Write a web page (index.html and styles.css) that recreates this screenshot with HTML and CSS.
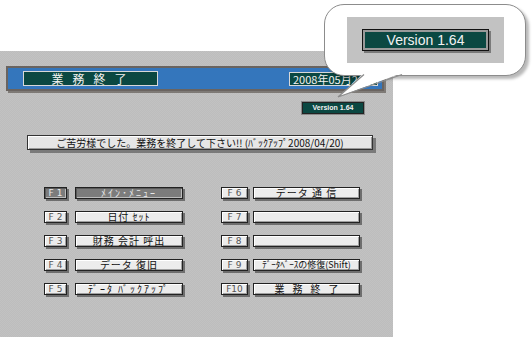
FILE: index.html
```html
<!DOCTYPE html>
<html lang="ja">
<head>
<meta charset="utf-8">
<link rel="stylesheet" href="styles.css">
</head>
<body>
<div class="panel">
  <div class="header">
    <div class="title">業務終了</div>
    <div class="date">2008年05月26日</div>
  </div>
  <div class="verrow"><div class="ver-small">Version 1.64</div></div>
  <div class="message">ご苦労様でした。業務を終了して下さい!!&nbsp;(ﾊﾞｯｸｱｯﾌﾟ2008/04/20)</div>
  <div class="keys">
    <div class="col left">
      <div class="row"><span class="key on">F1</span><span class="label on narrow">ﾒｲﾝ･ﾒﾆｭｰ</span></div>
      <div class="row"><span class="key">F2</span><span class="label">日付 ｾｯﾄ</span></div>
      <div class="row"><span class="key">F3</span><span class="label">財務 会計 呼出</span></div>
      <div class="row"><span class="key">F4</span><span class="label">データ 復旧</span></div>
      <div class="row"><span class="key">F5</span><span class="label narrow">ﾃﾞｰﾀ ﾊﾞｯｸｱｯﾌﾟ</span></div>
    </div>
    <div class="col right">
      <div class="row"><span class="key">F6</span><span class="label">データ 通 信</span></div>
      <div class="row"><span class="key">F7</span><span class="label"></span></div>
      <div class="row"><span class="key">F8</span><span class="label"></span></div>
      <div class="row"><span class="key">F9</span><span class="label tight">ﾃﾞｰﾀﾍﾞｰｽの修復(Shift)</span></div>
      <div class="row"><span class="key k10">F10</span><span class="label wide">業務終了</span></div>
    </div>
  </div>
</div>
<div class="bubble">
  <div class="bubble-inner"><div class="ver-big">Version 1.64</div></div>
</div>
<svg class="tail" width="90" height="40" viewBox="330 66 90 40">
  <polygon points="364,73 338,97 402,73" fill="#fff"/>
  <polyline points="364,74.5 338,97 402,74.5" fill="none" stroke="#8c8c8c" stroke-width="1.3"/>
</svg>
</body>
</html>
```
FILE: styles.css
```css
html, body {
  margin: 0;
  padding: 0;
  background: #fff;
}
body {
  width: 532px;
  height: 337px;
  overflow: hidden;
  font-family: "Noto Sans CJK JP", "DejaVu Sans", sans-serif;
}
.panel {
  margin-top: 51px;
  width: 393px;
  height: 286px;
  box-sizing: border-box;
  padding: 15px 0 0 6px;
  background: #c0c0c0;
  background-image: repeating-conic-gradient(#c2c2c2 0 25%, #bdbdbd 0 50%);
  background-size: 2px 2px;
}
.header {
  width: 378px;
  height: 25px;
  box-sizing: border-box;
  background: #3476bc;
  border: 2px solid #6a6460;
  box-shadow: 2px 2px 0 #7e7a76;
  display: flex;
  align-items: center;
  justify-content: space-between;
  padding: 0 4px 0 15px;
}
.title, .date, .ver-small, .ver-big {
  background: #0b4842;
  color: #f2f2f2;
  box-sizing: border-box;
}
.title {
  width: 135px;
  height: 15px;
  border: 1px solid #d8d8d8;
  font-size: 12px;
  line-height: 13px;
  letter-spacing: 9px;
  text-align: center;
  padding-left: 6px;
}
.date {
  width: 89px;
  height: 14px;
  border: 1px solid #d8d8d8;
  font-size: 11px;
  line-height: 12px;
  padding-left: 3px;
  white-space: nowrap;
  overflow: hidden;
}
.verrow {
  display: flex;
  justify-content: flex-end;
  width: 358px;
  margin-top: 11px;
}
.ver-small {
  width: 62px;
  height: 12px;
  border: 1px solid #222;
  outline: 1px solid #8a8a8a;
  font-family: "Liberation Sans", sans-serif;
  font-weight: bold;
  font-size: 7px;
  line-height: 10px;
  text-align: center;
}
.message {
  margin: 21px 0 0 21px;
  width: 346px;
  height: 15px;
  box-sizing: border-box;
  background: #e6e6e6;
  border: 1px solid #333;
  box-shadow: inset 1px 1px 0 #fff, inset -1px -1px 0 #9a9a9a, 3px 3px 0 #7a7a7a;
  font-size: 10px;
  line-height: 13px;
  text-align: center;
  color: #111;
  white-space: nowrap;
}
.keys {
  display: flex;
  margin: 37px 0 0 38px;
  gap: 38px;
}
.col {
  display: flex;
  flex-direction: column;
  gap: 12px;
}
.row {
  display: flex;
  gap: 8px;
  height: 12px;
}
.right .row { gap: 5px; }
.key, .label {
  box-sizing: border-box;
  height: 12px;
  border: 1px solid #222;
  background: #ececec;
  box-shadow: inset 1px 1px 0 #fff, inset -1px -1px 0 #a0a0a0, 2px 2px 0 #6e6e6e;
  font-size: 10px;
  line-height: 10px;
  text-align: center;
  color: #111;
  white-space: nowrap;
}
.key {
  width: 23px;
  font-family: "DejaVu Sans", sans-serif;
  font-size: 9px;
  letter-spacing: 3px;
  padding-left: 3px;
  color: #555;
}
.right .key { width: 27px; }
.key.k10 { letter-spacing: 0; padding-left: 0; }
.label {
  width: 108px;
  letter-spacing: 1px;
}
.right .label { width: 107px; }
.label.narrow { letter-spacing: 2px; }
.label.tight { letter-spacing: 0; font-size: 9px; }
.label.wide { letter-spacing: 8px; padding-left: 8px; }
.key.on, .label.on {
  background: #7c7c7c;
  color: #e8e8e8;
  box-shadow: inset 1px 1px 0 #5a5a5a, inset -1px -1px 0 #bcbcbc, 2px 2px 0 #6e6e6e;
}
.bubble {
  position: absolute;
  left: 324px;
  top: 4px;
  width: 202px;
  height: 72px;
  box-sizing: border-box;
  background: #fff;
  border: 1.5px solid #8c8c8c;
  border-radius: 20px;
  box-shadow: 3px 3px 3px rgba(0, 0, 0, 0.28);
  display: flex;
  align-items: center;
  justify-content: center;
}
.bubble-inner {
  width: 157px;
  height: 46px;
  margin-left: 1px;
  background: #c2c2c2;
  display: flex;
  align-items: center;
  justify-content: center;
}
.ver-big {
  width: 127px;
  height: 22px;
  border: 1px solid #111;
  box-shadow: inset 0 0 0 2px #9a9a9a, 2px 2px 0 #7a7a7a;
  font-family: "Liberation Sans", sans-serif;
  font-size: 14px;
  line-height: 20px;
  text-align: center;
}
.tail {
  position: absolute;
  left: 330px;
  top: 66px;
}
```
